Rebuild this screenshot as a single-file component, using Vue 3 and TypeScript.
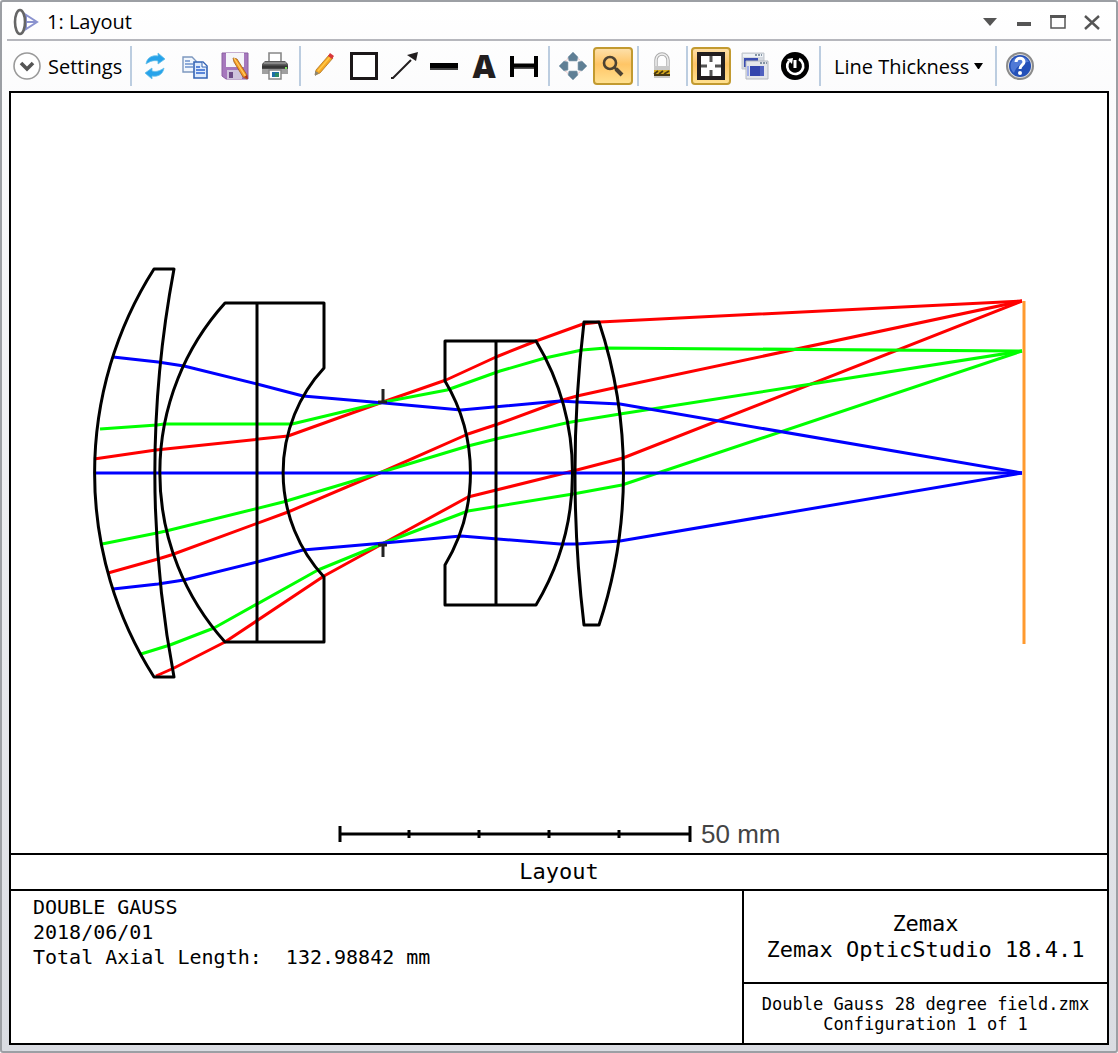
<script setup lang="ts">
interface Ray {
  color: string
  points: string
}

const axisY = 473

const rays: Ray[] = [
  { color: '#ff0000', points: '94,459 156,450 288,436 380,403 446,380 496,357 536,341 583,324 600,322 1022,301' },
  { color: '#ff0000', points: '108,573 158,559 171,555 288,512 382,472 468,434 498,424 563,400 577,396 618,387 1022,301' },
  { color: '#ff0000', points: '156,676 174,668 225,642 324,576 384,543 468,497 573,471 623,458 1022,301' },
  { color: '#00ff00', points: '100,429 157,425 164,424 292,424 384,402 447,390 500,371 545,358 582,350 606,348 1022,351' },
  { color: '#00ff00', points: '102,544 157,533 166,531 283,502 350,482 382,472 468,446 500,438 566,423 577,421 620,414 1022,351' },
  { color: '#00ff00', points: '141,654 170,645 214,628 318,570 384,543 468,511 573,494 622,485 1022,351' },
  { color: '#0000ff', points: '113,357 158,362 184,366 257,384 303,396 384,403 461,410 560,401 577,402 620,404 1022,473' },
  { color: '#0000ff', points: '113,589 158,584 184,580 257,562 303,550 384,543 461,536 560,544 577,544 620,541 1022,473' },
  { color: '#0000ff', points: `94,${axisY} 1022,${axisY}` },
]

const lensPaths: string[] = [
  'M154 269 H174 A1105 1105 0 0 0 174 677 H154 A380 380 0 0 1 154 269 Z',
  'M225 303 H324 V368 A154 154 0 0 0 324 577 V642 H225 A253 253 0 0 1 225 303 Z',
  'M257 303 V642',
  'M445 341 H536 A257 257 0 0 1 536 605 H445 V565 A179 179 0 0 0 445 381 Z',
  'M496 341 V605',
  'M584 322 H599 A481 481 0 0 1 599 625 H584 A1280 1280 0 0 1 584 322 Z',
]

const scaleTicks: number[] = [409, 479, 549, 619]
</script>

<template>
  <main class="window">
    <header class="titlebar">
      <svg class="app-icon" width="26" height="30" viewBox="0 0 26 30" aria-hidden="true">
        <path d="M7 4 L24 15 L7 26 M10 15 H24 M13 8 V22" fill="none" stroke="#8b93cf" stroke-width="2" />
        <ellipse cx="7" cy="15" rx="5" ry="12" fill="#fff" stroke="#666" stroke-width="2.6" />
      </svg>
      <h1>1: Layout</h1>
      <div class="window-buttons">
        <button type="button" aria-label="Window menu">
          <svg width="16" height="16" viewBox="0 0 16 16"><path d="M1 4 H15 L8 12 Z" fill="#555" /></svg>
        </button>
        <button type="button" aria-label="Minimize">
          <svg width="16" height="16" viewBox="0 0 16 16"><path d="M1 8 H15 V12 H1 Z" fill="#555" /></svg>
        </button>
        <button type="button" aria-label="Maximize">
          <svg width="16" height="16" viewBox="0 0 16 16"><path d="M1 2 H15 V14 H1 Z" fill="none" stroke="#555" stroke-width="1.5" /><path d="M0 1 H16 V4 H0 Z" fill="#555" /></svg>
        </button>
        <button type="button" aria-label="Close">
          <svg width="16" height="16" viewBox="0 0 16 16"><path d="M1 2 L15 15 M15 2 L1 15" stroke="#555" stroke-width="2.4" /></svg>
        </button>
      </div>
    </header>

    <nav class="toolbar" aria-label="Layout tools">
      <button type="button" class="settings">
        <svg width="28" height="28" viewBox="0 0 28 28" aria-hidden="true">
          <circle cx="14" cy="14" r="13" fill="#fff" stroke="#9a9a9a" stroke-width="1.6" />
          <path d="M8 11 L14 17 L20 11" fill="none" stroke="#555" stroke-width="3.6" />
        </svg>
        <span>Settings</span>
      </button>
      <i class="sep" />
      <button type="button" class="tool" aria-label="Update">
        <svg viewBox="0 0 28 28">
          <path d="M5 12 C6 5 12 3 17 4 V1 L24 7 L17 12 V9 C13 8 9 9 5 12 Z" fill="#27a3ea" stroke="#66bfe9" stroke-width=".8" />
          <path d="M23 16 C22 23 16 25 11 24 V27 L4 21 L11 16 V19 C15 20 19 19 23 16 Z" fill="#27a3ea" stroke="#66bfe9" stroke-width=".8" />
        </svg>
      </button>
      <button type="button" class="tool" aria-label="Copy">
        <svg viewBox="0 0 28 28">
          <path d="M2 5 H11 L15 9 V20 H2 Z" fill="#f2f7fd" stroke="#7d98bf" stroke-width="1.4" />
          <path d="M4 9 H9 M4 12 H12 M4 15 H12" stroke="#6e93cb" stroke-width="1.3" />
          <path d="M13 10 H22 L26 14 V26 H13 Z" fill="#deebfc" stroke="#3564b5" stroke-width="1.6" />
          <path d="M21 10 V15 H26" fill="#fff" stroke="#3564b5" />
          <path d="M15 15 H19 M15 18 H24 M15 21 H24" stroke="#2f65ce" stroke-width="1.4" />
        </svg>
      </button>
      <button type="button" class="tool" aria-label="Save">
        <svg viewBox="0 0 28 28">
          <path d="M1 1 H27 V27 H5 L1 24 Z" fill="#a678bd" stroke="#8a5fa2" />
          <path d="M5 1 H23 V15 H5 Z" fill="#f5f5fa" />
          <path d="M6 18 H21 V27 H6 Z" fill="#cfc3dc" />
          <path d="M8 20 H12 V26 H8 Z" fill="#6d4b87" />
          <path d="M12 6 L16 7 L26 23 L26 27 L22 25 L13 10 Z" fill="#f79a24" stroke="#9c5a1c" stroke-width=".8" />
          <path d="M13 6 L25 25" stroke="#ffd067" stroke-width="1.2" />
          <path d="M23 25 L27 27 L26 23 Z" fill="#b22e1f" />
        </svg>
      </button>
      <button type="button" class="tool" aria-label="Print">
        <svg viewBox="0 0 28 28">
          <path d="M8 11 V1 H20 V11" fill="#fff" stroke="#888" stroke-width="1.6" />
          <path d="M4 9 H24 L27 12 V21 H1 V12 Z" fill="#5c5c5c" />
          <path d="M3 11 H25" stroke="#888" stroke-width="2" />
          <path d="M1 15 H27" stroke="#363636" stroke-width="3" />
          <path d="M1 17 H27 V22 H1 Z" fill="#a0a0a0" />
          <path d="M24 16 H26" stroke="#78e15b" stroke-width="2" />
          <path d="M8 18 H20 V27 H8 Z" fill="#fff" stroke="#888" stroke-width="1.5" />
          <path d="M11 20 H18 V25 H11 Z" fill="#1f6fa8" /><path d="M14 21 H18 V25 H14 Z" fill="#2b8b65" />
        </svg>
      </button>
      <i class="sep" />
      <button type="button" class="tool" aria-label="Pencil">
        <svg viewBox="0 0 28 28">
          <path d="M5 23 L6 18 L19 3 L23 6 L10 21 Z" fill="#f7a823" stroke="#ab7425" stroke-width=".8" />
          <path d="M8 19 L20 5" stroke="#ffca4c" stroke-width="1.4" />
          <path d="M18 4 L20 1 L24 4 L22 7 Z" fill="#d8373b" />
          <path d="M5 24 V19 L9 21 Z" fill="#8d8672" />
        </svg>
      </button>
      <button type="button" class="tool" aria-label="Rectangle">
        <svg viewBox="0 0 28 28"><path d="M1.5 1.5 H26.5 V26.5 H1.5 Z" fill="#fff" stroke="#1c1819" stroke-width="3" /></svg>
      </button>
      <button type="button" class="tool" aria-label="Arrow">
        <svg viewBox="0 0 28 28"><path d="M1 26 H3 L21 8" fill="none" stroke="#221e1f" stroke-width="2" /><path d="M28 0 L26 9 L23 7 L20 5 L17 3 Z" fill="#221e1f" /></svg>
      </button>
      <button type="button" class="tool" aria-label="Line">
        <svg viewBox="0 0 28 28"><path d="M0 11 H28 V18 H0 Z" fill="#000" /><path d="M0 16 H28 V18 H0 Z" fill="#444" /></svg>
      </button>
      <button type="button" class="tool letter" title="Text">A</button>
      <button type="button" class="tool" aria-label="Dimension">
        <svg viewBox="0 0 28 28"><path d="M2 4 V25 M26 4 V25" stroke="#000" stroke-width="4" /><path d="M2 14 H26" stroke="#000" stroke-width="5" /><path d="M4 16 H24" stroke="#444" stroke-width="1.5" /></svg>
      </button>
      <i class="sep" />
      <button type="button" class="tool" aria-label="Pan">
        <svg viewBox="0 0 28 28">
          <circle cx="14" cy="14" r="9" fill="none" stroke="#e5a3a3" stroke-width="1" stroke-dasharray="2 1" />
          <g fill="#5f7f95" stroke="#8fa6b5" stroke-width=".6">
            <path d="M14 0 L19 5 L18 9 H10 L9 5 Z" />
            <path d="M14 28 L19 23 L18 19 H10 L9 23 Z" />
            <path d="M0 14 L5 9 L9 10 V18 L5 19 Z" />
            <path d="M28 14 L23 9 L19 10 V18 L23 19 Z" />
          </g>
        </svg>
      </button>
      <button type="button" class="tool active" aria-label="Zoom" aria-pressed="true">
        <svg viewBox="0 0 28 28">
          <circle cx="11" cy="11" r="6" fill="none" stroke="#4c4232" stroke-width="2.6" />
          <path d="M15 15 L18 18" stroke="#4c4232" stroke-width="2.6" />
          <path d="M17 17 L23 23" stroke="#4c4232" stroke-width="4" />
        </svg>
      </button>
      <i class="sep" />
      <button type="button" class="tool" aria-label="Lock">
        <svg viewBox="0 0 28 28">
          <path d="M8 15 V8 A6 6 0 0 1 20 8 V15" fill="none" stroke="#aaa" stroke-width="3.4" />
          <path d="M8 15 V8 A6 6 0 0 1 20 8 V15" fill="none" stroke="#eee" stroke-width="1.6" />
          <path d="M6 14 H22 V26 H6 Z" fill="#c9c9c9" />
          <path d="M6 18 H22 V24 H6 Z" fill="#d8ab20" />
          <path d="M6 22 L10 19 M11 22 L15 19 M16 22 L21 19 M6 23 H22" stroke="#4a3a12" stroke-width="1.8" />
        </svg>
      </button>
      <i class="sep" />
      <button type="button" class="tool active spaced" aria-label="Fit window" aria-pressed="true">
        <svg viewBox="0 0 28 28">
          <path d="M2 2 H26 V26 H2 Z" fill="#fff" stroke="#221e1f" stroke-width="4" />
          <path d="M14 4 V10 M14 18 V24 M4 14 H10 M18 14 H24" stroke="#555" stroke-width="3" />
        </svg>
      </button>
      <button type="button" class="tool" aria-label="Clone window">
        <svg viewBox="0 0 28 28">
          <path d="M1 1 H23 V17 H1 Z" fill="#d4d8df" stroke="#c2c7ce" />
          <path d="M2 2 H22 V5 H2 Z" fill="#eef2f6" /><path d="M14 3 H21" stroke="#64788c" stroke-width="1.6" stroke-dasharray="2 1" />
          <path d="M3 6 H17 V15 H3 Z" fill="#3b4db0" />
          <path d="M5 9 H27 V27 H5 Z" fill="#e4e6ea" stroke="#b3b8bf" />
          <path d="M19 11 H26" stroke="#64788c" stroke-width="1.6" stroke-dasharray="2 1" />
          <path d="M6 14 H8 V24 H6 Z" fill="#9fadea" /><path d="M9 14 H19 V24 H9 Z" fill="#3345ad" /><path d="M19 14 H23 V24 H19 Z" fill="#5061bf" />
        </svg>
      </button>
      <button type="button" class="tool" aria-label="Reset">
        <svg viewBox="0 0 28 28">
          <circle cx="14" cy="14" r="14" fill="#000" />
          <path d="M8 9 A8 8 0 1 0 18 7" fill="none" stroke="#fff" stroke-width="2.6" />
          <path d="M6 7 L12 6 L11 12 Z" fill="#fff" />
          <path d="M14 8 V16" stroke="#fff" stroke-width="3" />
        </svg>
      </button>
      <i class="sep" />
      <button type="button" class="thickness" aria-haspopup="menu">
        <span>Line Thickness</span>
        <svg width="9" height="6" viewBox="0 0 9 6" aria-hidden="true"><path d="M0 0 H9 L5 6 H4 Z" fill="#000" /></svg>
      </button>
      <i class="sep" />
      <button type="button" class="tool" aria-label="Help">
        <svg viewBox="0 0 28 28">
          <circle cx="14" cy="14" r="13" fill="#ddd" stroke="#8b8b8b" stroke-width="2" />
          <circle cx="14" cy="14" r="11" fill="#2450b8" />
          <path d="M5 11 A10 10 0 0 1 23 10 C17 10 11 13 8 21 A10 10 0 0 1 5 11 Z" fill="#5079d6" />
          <path d="M10 10 C10 5 18 5 18 10 C18 13 14 13 14 17" fill="none" stroke="#fff" stroke-width="3" />
          <circle cx="14" cy="21" r="2" fill="#fff" />
        </svg>
      </button>
    </nav>

    <section class="sheet">
      <svg class="drawing" viewBox="11 93 1096 760" role="img" aria-label="Double Gauss lens layout">
        <g fill="none" stroke-width="3" stroke-linejoin="round">
          <polyline v-for="(ray, index) in rays" :key="index" :points="ray.points" :stroke="ray.color" />
          <path d="M1024 301 V644" stroke="#ff9a2e" stroke-width="3" />
          <path v-for="path in lensPaths" :key="path" :d="path" stroke="#000" />
        </g>
        <path d="M383 389 V402 M378 402 H387 M383 557 V544 M378 545 H387" stroke="#222" stroke-width="3" />
        <g stroke="#000" stroke-width="3">
          <path d="M340 834 H690 M340 826 V842 M690 826 V842" />
          <path v-for="x in scaleTicks" :key="x" :d="`M${x} 830 V838`" />
        </g>
        <text x="701" y="843" class="scale-label">50 mm</text>
      </svg>
      <h2 class="caption">Layout</h2>
      <footer class="info">
        <div class="summary">
          <p>DOUBLE GAUSS</p>
          <p>2018/06/01</p>
          <p>Total Axial Length:&nbsp; 132.98842 mm</p>
        </div>
        <div class="credits">
          <div class="product">
            <p>Zemax</p>
            <p>Zemax OpticStudio 18.4.1</p>
          </div>
          <div class="file">
            <p>Double Gauss 28 degree field.zmx</p>
            <p>Configuration 1 of 1</p>
          </div>
        </div>
      </footer>
    </section>
  </main>
</template>

<style>
body {
  margin: 0;
  background: #fff;
}
</style>

<style scoped>
.window {
  box-sizing: border-box;
  min-height: 100vh;
  display: flex;
  flex-direction: column;
  padding: 0 7px 6px;
  border: 2px solid #9c9fa4;
  border-radius: 3px;
  background: linear-gradient(#fff, #fbfbfc 10%, #dadce2);
  font-family: "Open Sans", "Noto Sans", sans-serif;
  font-size: 20px;
  color: #000;
}

h1,
h2,
p {
  margin: 0;
  font-weight: 400;
  font-size: inherit;
}

button {
  padding: 0;
  border: 0;
  background: none;
  font: inherit;
  color: inherit;
}

svg {
  display: block;
}

.titlebar {
  display: flex;
  align-items: center;
  gap: 8px;
  height: 35px;
  margin: 0 -2px;
  padding: 2px 2px 0 6px;
  border-bottom: 2px solid #b6b7bd;
}

h1 {
  flex: 1;
  line-height: 28px;
}

.app-icon {
  flex: none;
}

.window-buttons {
  display: flex;
}

.window-buttons button {
  display: grid;
  place-items: center;
  width: 34px;
  height: 28px;
}

.toolbar {
  display: flex;
  align-items: center;
  height: 50px;
  white-space: nowrap;
}

.settings {
  display: flex;
  align-items: center;
  gap: 7px;
  width: 117px;
  padding-left: 4px;
}

.sep {
  flex: none;
  width: 2px;
  height: 40px;
  margin: 0 3px 0 4px;
  background: #bccde0;
}

.tool {
  box-sizing: border-box;
  flex: none;
  display: grid;
  place-items: center;
  width: 40px;
  height: 38px;
}

.tool svg {
  width: 28px;
  height: 28px;
}

.letter {
  font-size: 32px;
  font-weight: 800;
  line-height: 38px;
  color: #221e1f;
}

.active {
  border: 2px solid #c29a30;
  border-radius: 4px;
  background: linear-gradient(#fddfa8, #ffc566 45%, #ffe08f);
}

.spaced {
  margin-right: 4px;
}

.thickness {
  display: flex;
  align-items: center;
  gap: 5px;
  padding: 0 8px 0 10px;
}

.sheet {
  flex: 1;
  display: flex;
  flex-direction: column;
  border: 2px solid #000;
  background: #fff;
  font-family: "DejaVu Sans Mono", monospace;
}

.drawing {
  flex: 1;
  width: 100%;
}

.scale-label {
  font-family: "Liberation Sans", Arial, sans-serif;
  font-size: 26px;
  fill: #444;
}

.caption {
  border-top: 2px solid #000;
  border-bottom: 2px solid #000;
  font-size: 22px;
  line-height: 34px;
  text-align: center;
}

.info {
  display: flex;
  min-height: 152px;
}

.summary {
  flex: 1;
  padding: 4px 22px;
  line-height: 25px;
}

.credits {
  flex: none;
  width: 363px;
  display: flex;
  flex-direction: column;
  border-left: 2px solid #000;
  text-align: center;
}

.product {
  flex: 1;
  display: flex;
  flex-direction: column;
  justify-content: center;
  border-bottom: 2px solid #000;
  font-size: 22px;
  line-height: 26px;
}

.file {
  padding: 10px 0 9px;
  font-size: 17px;
  line-height: 20px;
}
</style>
